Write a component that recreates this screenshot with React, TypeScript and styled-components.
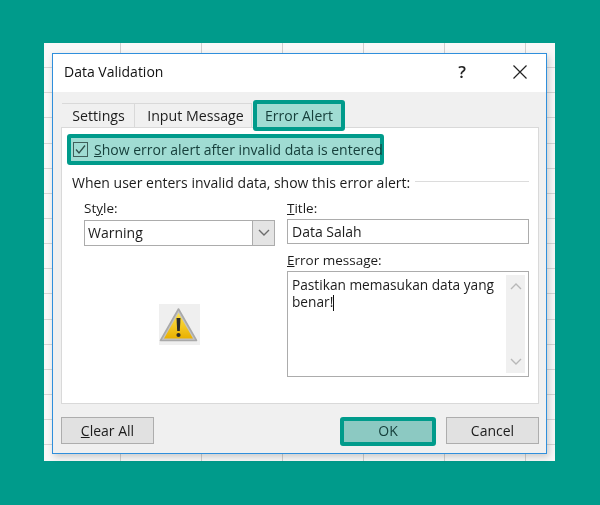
import React from "react";
import styled, { createGlobalStyle } from "styled-components";

const GlobalStyle = createGlobalStyle`
  html, body {
    margin: 0;
    padding: 0;
    background-color: #009b8b;
  }
  body {
    font-family: "Open Sans", "Noto Sans", sans-serif;
    color: #1c1c1c;
  }
`;

const Page = styled.div`
  width: 600px;
  height: 505px;
  padding: 43px 45px 44px 44px;
  box-sizing: border-box;
  overflow: hidden;
  filter: blur(0.3px);
`;

const Sheet = styled.div`
  height: 100%;
  padding: 10px 8px 7px;
  box-sizing: border-box;
  background-color: #f8f8f8;
  background-image:
    repeating-linear-gradient(to right, transparent 0 76px, #cfcfcf 76px 77px, transparent 77px 81px),
    repeating-linear-gradient(to bottom, transparent 0 24.14px, #d6d6d6 24.14px 25.14px);
`;

const Dialog = styled.div`
  height: 100%;
  display: flex;
  flex-direction: column;
  box-sizing: border-box;
  border: 1.5px solid #2f8fdc;
  background-color: #f0f0f0;
  box-shadow: 2px 3px 7px rgba(0, 0, 0, 0.18);
`;

const TitleBar = styled.div`
  height: 38px;
  flex: none;
  box-sizing: border-box;
  display: flex;
  align-items: center;
  padding: 0 19px 3px 11px;
  background-color: #fff;
`;

const DialogTitle = styled.div`
  flex: 1;
  font-size: 14px;
  color: #111;
`;

const HelpMark = styled.div`
  width: 16px;
  margin-right: 43px;
  text-align: center;
  font-size: 17px;
  font-weight: 600;
  color: #222;
`;

const Body = styled.div`
  flex: 1;
  display: flex;
  flex-direction: column;
  padding: 8px 7px 0 8px;
`;

const Tabs = styled.div`
  height: 31px;
  display: flex;
  align-items: flex-end;
  padding-left: 1px;
  margin-bottom: -4px;
  position: relative;
  z-index: 1;
`;

const Tab = styled.div<{ $width: number; $inset: number }>`
  width: ${(p) => p.$width}px;
  height: 24px;
  margin-bottom: 4px;
  padding-left: ${(p) => p.$inset}px;
  box-sizing: border-box;
  display: flex;
  align-items: center;
  justify-content: center;
  border-top: 1px solid #d9d9d9;
  border-right: 1px solid #d9d9d9;
  font-size: 14.2px;
  color: #1c1c1c;
`;

const ActiveTab = styled.div`
  width: 92px;
  height: 31px;
  margin-left: 1px;
  box-sizing: border-box;
  display: flex;
  align-items: center;
  justify-content: center;
  border: 4px solid #009b8b;
  border-radius: 3px;
  background-color: #a0dcd3;
  font-size: 14px;
  color: #17403c;
`;

const Panel = styled.div`
  height: 277px;
  flex: none;
  box-sizing: border-box;
  padding: 6px 9px 0 5px;
  border: 1px solid #d9d9d9;
  background-color: #fff;
`;

const CheckRow = styled.div`
  width: 317px;
  height: 31px;
  box-sizing: border-box;
  display: flex;
  align-items: center;
  gap: 6px;
  padding: 0 0 1px 2px;
  border: 4px solid #009b8b;
  border-radius: 3px;
  background-color: #a0dcd3;
  font-size: 14px;
  color: #17403c;
  white-space: nowrap;
`;

const CheckBox = styled.div`
  width: 15px;
  height: 15px;
  flex: none;
  display: flex;
  box-sizing: border-box;
  border: 1px solid #3f5f5b;
`;

const GroupHeading = styled.div`
  display: flex;
  align-items: center;
  gap: 5px;
  margin: 8px 0 0 5px;
  font-size: 14px;
  line-height: 20px;
  white-space: nowrap;
`;

const GroupLine = styled.div`
  flex: 1;
  height: 1px;
  margin-top: -3px;
  background-color: #dcdcdc;
`;

const Form = styled.div`
  display: grid;
  grid-template-columns: 191px 242px;
  column-gap: 12px;
  margin: 5px 0 0 17px;
`;

const Column = styled.div`
  display: flex;
  flex-direction: column;
`;

const Label = styled.div`
  height: 20px;
  font-size: 13.5px;
  line-height: 20px;
  margin-bottom: 1px;
`;

const SelectBox = styled.div`
  height: 26px;
  margin-top: 1px;
  box-sizing: border-box;
  display: flex;
  align-items: center;
  border: 1px solid #acacac;
  font-size: 14px;
  padding-left: 3px;
`;

const SelectValue = styled.div`
  flex: 1;
  padding-bottom: 2px;
`;

const SelectArrow = styled.div`
  width: 21px;
  height: 100%;
  display: flex;
  align-items: center;
  justify-content: center;
  border-left: 1px solid #acacac;
  background-color: #e4e4e4;
`;

const TextField = styled.div`
  height: 25px;
  box-sizing: border-box;
  display: flex;
  align-items: center;
  padding-left: 4px;
  margin-bottom: 6px;
  border: 1px solid #acacac;
  font-size: 14px;
`;

const MessageBox = styled.div`
  height: 106px;
  box-sizing: border-box;
  display: flex;
  padding: 3px;
  border: 1px solid #acacac;
  font-size: 13.7px;
  line-height: 17px;
`;

const MessageText = styled.div`
  flex: 1;
  padding: 1px 0 0 1px;
`;

const Caret = styled.span`
  display: inline-block;
  width: 1px;
  height: 16px;
  vertical-align: -4px;
  background-color: #111;
`;

const Scrollbar = styled.div`
  width: 19px;
  flex: none;
  display: flex;
  flex-direction: column;
  justify-content: space-between;
  align-items: center;
  padding: 7px 0;
  box-sizing: border-box;
  background-color: #f0f0f0;
`;

const IconSlot = styled.div`
  display: flex;
  justify-content: center;
  margin-top: 58px;
`;

const Footer = styled.div`
  display: flex;
  align-items: flex-start;
  margin-top: 13px;
`;

const Button = styled.div`
  width: 93px;
  height: 27px;
  box-sizing: border-box;
  display: flex;
  align-items: center;
  justify-content: center;
  border: 1px solid #adadad;
  background-color: #e1e1e1;
  font-size: 14px;
`;

const OkButton = styled(Button)`
  width: 96px;
  height: 29px;
  margin-left: auto;
  margin-right: 10px;
  padding-bottom: 2px;
  border: 4px solid #009b8b;
  border-radius: 3px;
  background-color: #8cc9c2;
  color: #17403c;
`;

const WarningIcon = () => (
  <svg width="41" height="41" viewBox="0 0 41 41">
    <defs>
      <linearGradient id="warnFill" x1="0" y1="0" x2="0" y2="1">
        <stop offset="0" stopColor="#ffe34d" />
        <stop offset="1" stopColor="#e9b000" />
      </linearGradient>
    </defs>
    <rect width="41" height="41" fill="#efefef" />
    <path d="M19.5 5 L37.5 36.5 H1.5 Z" fill="#c4c4c4" stroke="#a9a9a9" strokeWidth="1.6" strokeLinejoin="round" />
    <path d="M19.5 9 L34 34.5 H5 Z" fill="url(#warnFill)" />
    <path d="M17.5 14 H21.5 L20.8 27 H18.2 Z" fill="#2a2a2a" />
    <circle cx="19.5" cy="31" r="2.1" fill="#2a2a2a" />
  </svg>
);

const Chevron = ({ up = false, color = "#6d6d6d" }: { up?: boolean; color?: string }) => (
  <svg width="12" height="8" viewBox="0 0 12 8">
    <path
      d={up ? "M1 7 L6 2 L11 7" : "M1 1 L6 6 L11 1"}
      fill="none"
      stroke={color}
      strokeWidth="1.4"
    />
  </svg>
);

export default function App() {
  return (
    <>
      <GlobalStyle />
      <Page>
        <Sheet>
          <Dialog>
            <TitleBar>
              <DialogTitle>Data Validation</DialogTitle>
              <HelpMark>?</HelpMark>
              <svg width="14" height="14" viewBox="0 0 14 14">
                <path d="M0.5 0.5 L13.5 13.5 M13.5 0.5 L0.5 13.5" stroke="#222" strokeWidth="1.2" />
              </svg>
            </TitleBar>
            <Body>
              <Tabs>
                <Tab $width={73} $inset={1}>Settings</Tab>
                <Tab $width={117} $inset={5}>Input Message</Tab>
                <ActiveTab>Error Alert</ActiveTab>
              </Tabs>
              <Panel>
                <CheckRow>
                  <CheckBox>
                    <svg width="13" height="13" viewBox="0 0 13 13">
                      <path d="M2 6.5 L5 10 L11 2.5" fill="none" stroke="#2f4f4b" strokeWidth="1.3" />
                    </svg>
                  </CheckBox>
                  <span>
                    <u>S</u>how error alert after invalid data is entered
                  </span>
                </CheckRow>
                <GroupHeading>
                  When user enters invalid data, show this error alert:
                  <GroupLine />
                </GroupHeading>
                <Form>
                  <Column>
                    <Label>
                      St<u>y</u>le:
                    </Label>
                    <SelectBox>
                      <SelectValue>Warning</SelectValue>
                      <SelectArrow>
                        <Chevron />
                      </SelectArrow>
                    </SelectBox>
                    <IconSlot>
                      <WarningIcon />
                    </IconSlot>
                  </Column>
                  <Column>
                    <Label>
                      <u>T</u>itle:
                    </Label>
                    <TextField>Data Salah</TextField>
                    <Label>
                      <u>E</u>rror message:
                    </Label>
                    <MessageBox>
                      <MessageText>
                        Pastikan memasukan data yang benar!
                        <Caret />
                      </MessageText>
                      <Scrollbar>
                        <Chevron up color="#b8b8b8" />
                        <Chevron color="#b8b8b8" />
                      </Scrollbar>
                    </MessageBox>
                  </Column>
                </Form>
              </Panel>
              <Footer>
                <Button>
                  <span>
                    <u>C</u>lear All
                  </span>
                </Button>
                <OkButton>OK</OkButton>
                <Button>Cancel</Button>
              </Footer>
            </Body>
          </Dialog>
        </Sheet>
      </Page>
    </>
  );
}
